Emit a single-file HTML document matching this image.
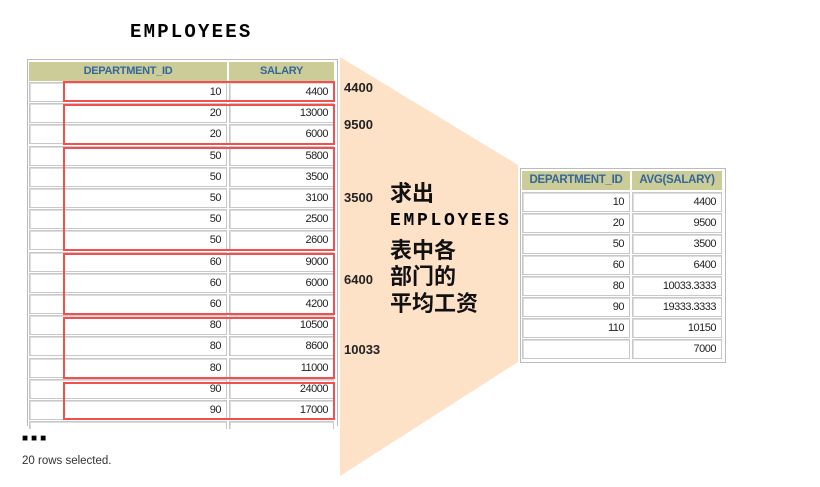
<!DOCTYPE html>
<html><head><meta charset="utf-8"><style>
body{margin:0;width:820px;height:487px;background:#fff;position:relative;overflow:hidden;font-family:"Liberation Sans",sans-serif}
.a{position:absolute}
.tb{position:absolute;background:#fff;border:1px solid #bbb}
.h{position:absolute;background:#cccc99;color:#336699;font-weight:bold;font-size:11px;text-align:center;line-height:19px;letter-spacing:-0.3px}
.c{position:absolute;border:1px solid #c8c8c8;box-shadow:inset 1px 1px 0 #ddd;font-size:11px;text-align:right;box-sizing:border-box;padding-right:5px;line-height:18px;color:#222;letter-spacing:-0.5px}
.r{position:absolute;border:2px solid #f05050;box-sizing:border-box}
.l{position:absolute;font-weight:bold;font-size:13px;color:#222}
.z{position:absolute;font-family:"Liberation Sans","Noto Sans CJK SC",sans-serif;font-size:22px;font-weight:bold;color:#111;line-height:26px}
</style></head><body>
<svg class="a" style="left:0;top:0" width="820" height="487"><polygon points="340,57 518,165 518,362 340,476" fill="#fde2c8"/></svg>
<div class="a" style="left:130px;top:21px;font-family:'Liberation Mono',monospace;font-weight:bold;font-size:19px;letter-spacing:2.2px">EMPLOYEES</div>
<div class="tb" style="left:27px;top:59px;width:309px;height:366px;border-bottom:none"></div>
<div class="h" style="left:29px;top:62px;width:198px">DEPARTMENT_ID</div>
<div class="h" style="left:229px;top:62px;width:105px">SALARY</div>
<div id="L"></div>
<div class="tb" style="left:520px;top:168px;width:204px;height:193px"></div>
<div class="h" style="left:522px;top:171px;width:108px;font-size:11.5px">DEPARTMENT_ID</div>
<div class="h" style="left:632px;top:171px;width:90px;font-size:11.5px">AVG(SALARY)</div>
<div id="R"></div>
<div class="r" style="left:63px;top:81px;width:272px;height:21px"></div>
<div class="r" style="left:63px;top:104px;width:272px;height:41px"></div>
<div class="r" style="left:63px;top:147px;width:272px;height:104px"></div>
<div class="r" style="left:63px;top:253px;width:272px;height:62px"></div>
<div class="r" style="left:63px;top:317px;width:272px;height:62px"></div>
<div class="r" style="left:63px;top:382px;width:272px;height:38px"></div>
<div class="l" style="left:344px;top:80px">4400</div>
<div class="l" style="left:344px;top:117px">9500</div>
<div class="l" style="left:344px;top:190px">3500</div>
<div class="l" style="left:344px;top:272px">6400</div>
<div class="l" style="left:344px;top:342px">10033</div>
<div class="z" style="left:390px;top:181px">求出</div>
<div class="a" style="left:390px;top:211px;font-family:'Liberation Mono',monospace;font-weight:bold;font-size:18px;letter-spacing:2.7px">EMPLOYEES</div>
<div class="z" style="left:390px;top:238px">表中各</div>
<div class="z" style="left:390px;top:264px">部门的</div>
<div class="z" style="left:390px;top:291px">平均工资</div>
<div class="a" style="left:22px;top:433px;font-weight:bold;font-size:10px;letter-spacing:3px">&#9632;&#9632;&#9632;</div>
<div class="a" style="left:22px;top:455px;font-size:11.5px;color:#333">20 rows selected.</div>
<script>
var d=[[10,4400],[20,13000],[20,6000],[50,5800],[50,3500],[50,3100],[50,2500],[50,2600],[60,9000],[60,6000],[60,4200],[80,10500],[80,8600],[80,11000],[90,24000],[90,17000]];
var h='';d.forEach(function(r,i){var y=82+i*21.2;h+='<div class="c" style="left:29px;top:'+y+'px;width:198px;height:20px">'+r[0]+'</div><div class="c" style="left:229px;top:'+y+'px;width:105px;height:20px">'+r[1]+'</div>';});
h+='<div class="c" style="left:29px;top:421px;width:198px;height:8px;border-bottom:none"></div><div class="c" style="left:229px;top:421px;width:105px;height:8px;border-bottom:none"></div>';
document.getElementById('L').outerHTML=h;
var e=[[10,4400],[20,9500],[50,3500],[60,6400],[80,'10033.3333'],[90,'19333.3333'],[110,10150],['',7000]];
h='';e.forEach(function(r,i){var y=192+i*21;h+='<div class="c" style="left:522px;top:'+y+'px;width:108px;height:20px">'+r[0]+'</div><div class="c" style="left:632px;top:'+y+'px;width:90px;height:20px">'+r[1]+'</div>';});
document.getElementById('R').outerHTML=h;
</script>
</body></html>
